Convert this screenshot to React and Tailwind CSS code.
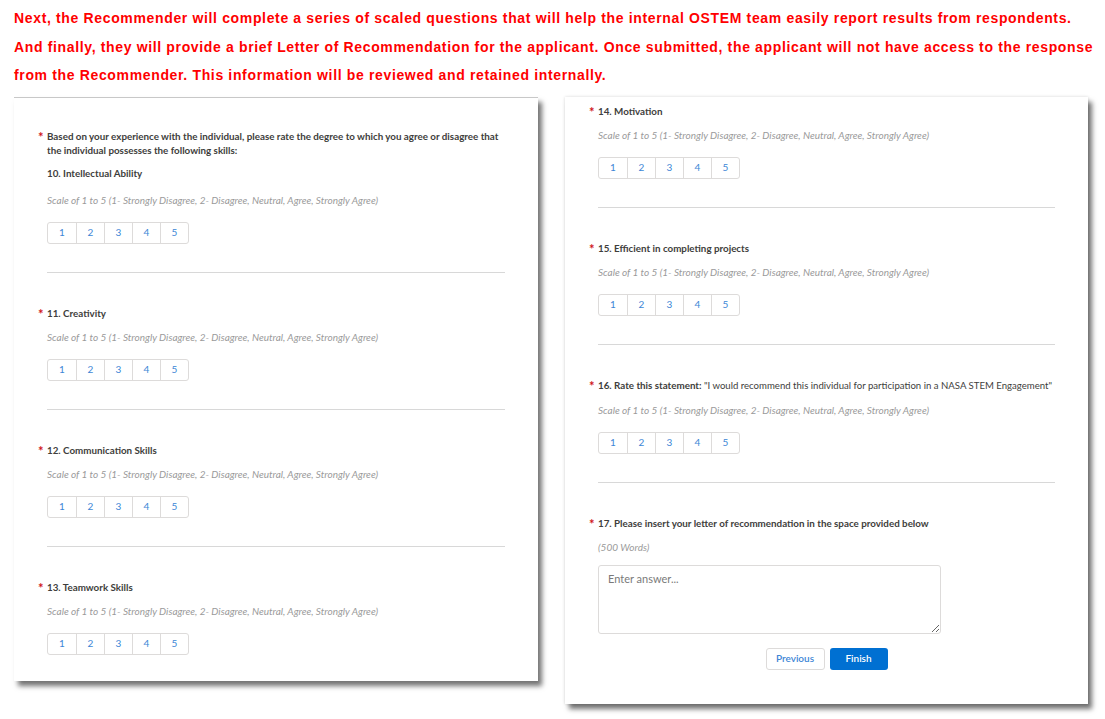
const scaleText = 'Scale of 1 to 5 (1- Strongly Disagree, 2- Disagree, Neutral, Agree, Strongly Agree)'

function Star() {
  return <span className="absolute -left-[9px] top-[1px] text-[13px] font-bold leading-[14px] text-[#d0151b]">*</span>
}

function ScaleButtons() {
  return (
    <div className="flex w-fit rounded-[3px] border border-[#dddbda] bg-white">
      {[1, 2, 3, 4, 5].map((n) => (
        <div
          key={n}
          className="flex h-[20px] w-[28px] items-center justify-center border-l border-[#dddbda] text-[10px] text-[#3d86d6] first:border-l-0"
        >
          {n}
        </div>
      ))}
    </div>
  )
}

// one rated question: title, hint, 1-5 buttons, optional divider
function ScaleQuestion({ title, hint = scaleText, divider = true }) {
  return (
    <div>
      <div className="relative whitespace-nowrap text-[9.8px] font-bold leading-[14px] text-[#3e3e3c]">
        <Star />
        {title}
      </div>
      <div className="mt-[10px] text-[10px] italic leading-[14px] text-[#9a9a9a]">{hint}</div>
      <div className="mt-[15px]">
        <ScaleButtons />
      </div>
      {divider && <div className="mt-[28px] mb-[33px] h-px bg-[#d8d8d8]" />}
    </div>
  )
}

export default function App() {
  return (
    <div className="h-[719px] w-[1105px] overflow-hidden bg-white" style={{ fontFamily: 'Lato, "Open Sans", sans-serif' }}>
      {/* red intro text */}
      <div
        className="px-[14px] pt-[4px] text-[14px] font-bold leading-[28.5px] tracking-[0.65px] text-[#ff0000] whitespace-nowrap"
        style={{ fontFamily: '"Liberation Sans", Arial, sans-serif' }}
      >
        <p>Next, the Recommender will complete a series of scaled questions that will help the internal OSTEM team easily report results from respondents.</p>
        <p>And finally, they will provide a brief Letter of Recommendation for the applicant. Once submitted, the applicant will not have access to the response</p>
        <p>from the Recommender. This information will be reviewed and retained internally.</p>
      </div>

      <div className="mt-[7px] flex items-start gap-[27px] pl-[14px]">
        {/* left card */}
        <div className="h-[584px] w-[524px] border-t border-[#c8c8c8] bg-white pl-[33px] pr-[33px] pt-[31px] shadow-[4px_5px_5px_rgba(0,0,0,0.55)]">
          <div className="relative text-[9.8px] font-bold leading-[14px] text-[#3e3e3c]">
            <Star />
            Based on your experience with the individual, please rate the degree to which you agree or disagree that
            <br />
            the individual possesses the following skills:
          </div>
          <div className="mt-[9px] text-[9.8px] font-bold leading-[14px] text-[#3e3e3c]">10. Intellectual Ability</div>
          <div className="mt-[13px] text-[10px] italic leading-[14px] text-[#9a9a9a]">{scaleText}</div>
          <div className="mt-[15px]">
            <ScaleButtons />
          </div>
          <div className="mt-[28px] mb-[33px] h-px bg-[#d8d8d8]" />
          <ScaleQuestion title="11. Creativity" />
          <ScaleQuestion title="12. Communication Skills" />
          <ScaleQuestion title="13. Teamwork Skills" divider={false} />
        </div>

        {/* right card */}
        <div className="h-[607px] w-[523px] bg-white pl-[33px] pr-[33px] pt-[7px] shadow-[4px_5px_5px_rgba(0,0,0,0.55),0_0_3px_rgba(0,0,0,0.15)]">
          <ScaleQuestion title="14. Motivation" />
          <ScaleQuestion title="15. Efficient in completing projects" />
          <ScaleQuestion
            title={
              <>
                16. Rate this statement:{' '}
                <span className="text-[9.6px] font-normal">"I would recommend this individual for participation in a NASA STEM Engagement"</span>
              </>
            }
            hint="Scale of 1 to 5  (1- Strongly Disagree, 2- Disagree, Neutral, Agree, Strongly Agree)"
          />
          <div className="relative text-[9.8px] font-bold leading-[14px] text-[#3e3e3c]">
            <Star />
            17. Please insert your letter of recommendation in the space provided below
          </div>
          <div className="mt-[10px] text-[10px] italic leading-[14px] text-[#9a9a9a]">(500 Words)</div>
          <textarea
            placeholder="Enter answer..."
            className="mt-[11px] block h-[69px] w-[343px] resize rounded-[3px] border border-[#dddbda] px-[9px] py-[5px] text-[11px] text-[#3e3e3c] placeholder:text-[#7a7a7a] focus:outline-none"
          />
          <div className="mt-[14px] flex justify-center gap-[5px]">
            <button className="h-[22px] w-[59px] rounded-[3px] border border-[#dddbda] bg-white text-[10px] font-semibold text-[#3d86d6]">Previous</button>
            <button className="h-[22px] w-[58px] rounded-[3px] bg-[#0070d2] text-[10px] font-semibold text-white">Finish</button>
          </div>
        </div>
      </div>
    </div>
  )
}
